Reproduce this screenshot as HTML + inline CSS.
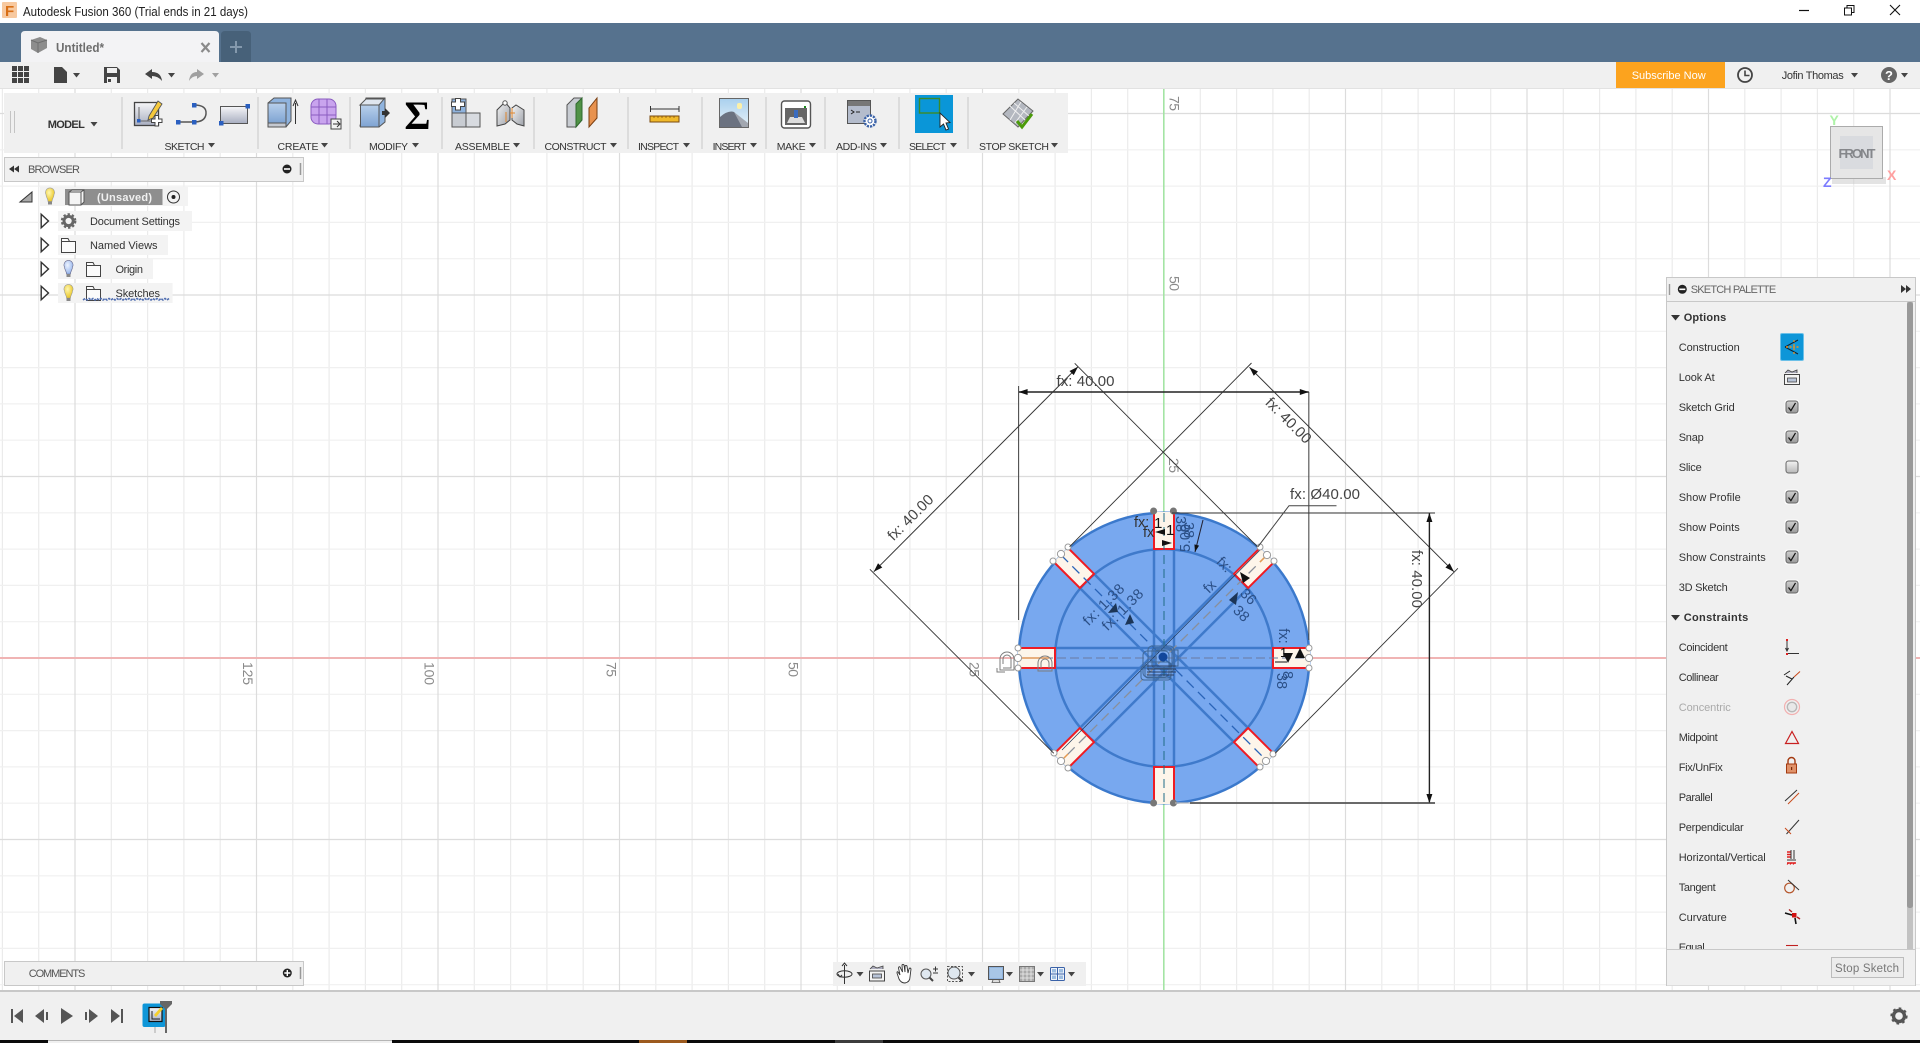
<!DOCTYPE html>
<html><head><meta charset="utf-8"><title>Autodesk Fusion 360</title>
<style>
html,body{margin:0;padding:0;background:#fff;overflow:hidden}
svg{display:block}
text{font-family:"Liberation Sans",sans-serif}
.t{font-size:10.5px;fill:#333}
.p{font-size:11px;fill:#333}
.d{font-size:15px;fill:#444}
.s{font-size:14.5px;fill:#2b4f86}
.a{font-size:14px;fill:#8a8a8a}
</style></head><body>
<svg width="1920" height="1043" viewBox="0 0 1920 1043" xmlns="http://www.w3.org/2000/svg" lengthAdjust="spacingAndGlyphs">
<defs>
<linearGradient id="cbg" x1="0" y1="0" x2="0" y2="1"><stop offset="0" stop-color="#d0d0d0"/><stop offset="1" stop-color="#9a9a9a"/></linearGradient>
<linearGradient id="cbu" x1="0" y1="0" x2="0" y2="1"><stop offset="0" stop-color="#f4f4f4"/><stop offset="1" stop-color="#b8b8b8"/></linearGradient>
<linearGradient id="blu" x1="0" y1="0" x2="0" y2="1"><stop offset="0" stop-color="#b8d0ec"/><stop offset="1" stop-color="#7ea3d2"/></linearGradient>
<linearGradient id="rct" x1="0" y1="0" x2="0" y2="1"><stop offset="0" stop-color="#f6f6f8"/><stop offset="1" stop-color="#a8aec0"/></linearGradient>
<linearGradient id="gry" x1="0" y1="0" x2="1" y2="1"><stop offset="0" stop-color="#f4f4f4"/><stop offset="1" stop-color="#9ea2aa"/></linearGradient>
<linearGradient id="sky" x1="0" y1="0" x2="0" y2="1"><stop offset="0" stop-color="#a9d0ee"/><stop offset="1" stop-color="#e8f2f8"/></linearGradient>
<radialGradient id="bulb" cx=".4" cy=".35" r=".7"><stop offset="0" stop-color="#fff7b0"/><stop offset="1" stop-color="#e8c21a"/></radialGradient>
<radialGradient id="bulbB" cx=".4" cy=".35" r=".7"><stop offset="0" stop-color="#eef4ff"/><stop offset="1" stop-color="#8fb0ea"/></radialGradient>
<polygon id="dn" points="0,0 7,0 3.5,4.5" fill="#444"/>
<g id="cb"><rect x="-1" y="-1" width="15" height="15" rx="3" fill="#fff" opacity=".7"/><rect x=".5" y=".5" width="12" height="12" rx="2.5" fill="url(#cbg)" stroke="#666"/><path d="M3 7 L5.4 10.2 L10 2.4" fill="none" stroke="#111" stroke-width="1.2"/></g>
<g id="fold"><path d="M.5 3.5 H14.5 V14.5 H.5 Z M.5 3.5 V.5 H7 L8.5 3.5" fill="#fbfbfb" stroke="#444" stroke-width="1"/></g>
<path id="tri" d="M.7 .7 L8 7.5 L.7 14.3 Z" fill="#fff" stroke="#333" stroke-width="1.4"/>
<g id="ar"><polygon points="0,0 -9,-3 -9,3" fill="#111"/></g>
<g id="bar">
  <path d="M-10 -109 V0 M10 -109 V0" stroke="#3f7acb" stroke-width="2.5" fill="none"/>
</g>
<g id="slot">
  <rect x="-10" y="-146" width="20" height="37" fill="#fdf5ea"/>
  <path d="M-10 -144 V-109 H10 V-144" fill="none" stroke="#ee1c24" stroke-width="2"/>
</g>
</defs>

<!-- canvas + grid -->
<rect x="0" y="88" width="1920" height="903" fill="#fff"/>
<path fill="none" stroke="#ebebeb" stroke-width="1.2" d="M2.4 88V991M38.7 88V991M111.3 88V991M147.6 88V991M183.9 88V991M220.2 88V991M292.8 88V991M329.1 88V991M365.4 88V991M401.7 88V991M474.3 88V991M510.6 88V991M546.9 88V991M583.2 88V991M655.8 88V991M692.1 88V991M728.4 88V991M764.7 88V991M837.3 88V991M873.6 88V991M909.9 88V991M946.2 88V991M1018.8 88V991M1055.1 88V991M1091.4 88V991M1127.7 88V991M1200.3 88V991M1236.6 88V991M1272.9 88V991M1309.2 88V991M1381.8 88V991M1418.1 88V991M1454.4 88V991M1490.7 88V991M1563.3 88V991M1599.6 88V991M1635.9 88V991M1672.2 88V991M1744.8 88V991M1781.1 88V991M1817.4 88V991M1853.7 88V991"/>
<path fill="none" stroke="#f0f0f0" stroke-width="1.2" d="M0 149.8H1920M0 186.1H1920M0 222.4H1920M0 258.7H1920M0 331.3H1920M0 367.6H1920M0 403.9H1920M0 440.2H1920M0 512.8H1920M0 549.1H1920M0 585.4H1920M0 621.7H1920M0 694.3H1920M0 730.6H1920M0 766.9H1920M0 803.2H1920M0 875.8H1920M0 912.1H1920M0 948.4H1920M0 984.7H1920"/>
<path fill="none" stroke="#dcdcdc" stroke-width="1.2" d="M75 88V991M256.5 88V991M438 88V991M619.5 88V991M801 88V991M982.5 88V991M1345.5 88V991M1527 88V991M1708.5 88V991M1890 88V991M0 113.5H1920M0 295H1920M0 476.5H1920M0 839.5H1920"/>
<rect x="0" y="657" width="1920" height="2" fill="#f0b4b4"/>
<rect x="1163" y="88" width="1.6" height="903" fill="#a4e4a4"/>

<!-- axis labels -->
<text class="a" transform="translate(243 662) rotate(90)" textLength="23">125</text>
<text class="a" transform="translate(424.5 662) rotate(90)" textLength="23">100</text>
<text class="a" transform="translate(606.5 662) rotate(90)" textLength="15">75</text>
<text class="a" transform="translate(788.5 662) rotate(90)" textLength="15">50</text>
<text class="a" transform="translate(969.5 662) rotate(90)" textLength="15">25</text>
<text class="a" transform="translate(1169.5 96) rotate(90)" textLength="15">75</text>
<text class="a" transform="translate(1169.5 276) rotate(90)" textLength="15">50</text>
<text class="a" transform="translate(1169 458) rotate(90)" textLength="15">25</text>

<!-- sketch -->
<circle cx="1164" cy="658" r="145.2" fill="#78a8ef" stroke="#3b79cc" stroke-width="2.5"/>
<g transform="translate(1164 658)">
  <circle r="108.9" fill="none" stroke="#3f7acb" stroke-width="2.5"/>
  <use href="#bar"/><use href="#bar" transform="rotate(45)"/><use href="#bar" transform="rotate(90)"/><use href="#bar" transform="rotate(135)"/>
  <use href="#bar" transform="rotate(180)"/><use href="#bar" transform="rotate(225)"/><use href="#bar" transform="rotate(270)"/><use href="#bar" transform="rotate(315)"/>
  <use href="#slot"/><use href="#slot" transform="rotate(45)"/><use href="#slot" transform="rotate(90)"/><use href="#slot" transform="rotate(135)"/>
  <use href="#slot" transform="rotate(180)"/><use href="#slot" transform="rotate(225)"/><use href="#slot" transform="rotate(270)"/><use href="#slot" transform="rotate(315)"/>
  <path d="M0 -145 V145" stroke="#1f6b86" stroke-width="1" stroke-dasharray="9 5"/>
  <path d="M-103 -103 L0 0 M0 0 L103 103" stroke="#2a64b8" stroke-width="1.3" stroke-dasharray="10 6"/>
  <path d="M103 -103 L-103 103" stroke="#8a8f9a" stroke-width="1.3" stroke-dasharray="10 6"/>
  <path d="M103 -103 L96 -96" stroke="#e69a50" stroke-width="1.5"/>
  <path d="M-103 103 L-96 96" stroke="#e69a50" stroke-width="1.5"/>
  <path d="M-146 0 H1" stroke="#6a7aa0" stroke-width="1" stroke-dasharray="9 4"/>
  <path d="M1 0 H146" stroke="#6a7aa0" stroke-width="1" stroke-dasharray="9 4"/>
  <path d="M-146 0 H-115" stroke="#e0985a" stroke-width="1.5"/>
  <path d="M96 -108 L-102 92" stroke="#1c3557" stroke-width=".7"/>
  <!-- center mess -->
  <g fill="none" stroke="#3f6796" stroke-width="1">
    <rect x="-16" y="-12" width="26" height="26" rx="4"/><rect x="-21" y="-7" width="26" height="26" rx="4"/>
    <rect x="-19" y="4" width="26" height="16" rx="3"/><rect x="-23" y="8" width="30" height="14" rx="3"/>
    <rect x="-8" y="-8" width="22" height="16"/><rect x="-12" y="-10" width="20" height="20" rx="3"/>
  </g>
  <path d="M-17 8 H12 M-17 11 H12 M-17 14 H12 M-17 17 H10" stroke="#2c3f60" stroke-width="1"/>
  <circle cx="-1" cy="-1" r="4.5" fill="#12479c"/>
</g>

<!-- sketch points -->
<g fill="#fff" stroke="#9a9a9a" stroke-width="1">
  <circle cx="1018" cy="648" r="3"/><circle cx="1018" cy="658" r="3.6"/><circle cx="1018" cy="668" r="3"/>
  <circle cx="1309" cy="648" r="3"/><circle cx="1309" cy="658" r="3.6"/><circle cx="1309" cy="668" r="3"/>
  <circle cx="1053" cy="561" r="3"/><circle cx="1061" cy="554" r="3.6"/><circle cx="1068" cy="547" r="3"/>
  <circle cx="1260" cy="547" r="3"/><circle cx="1267" cy="555" r="3.6"/><circle cx="1274" cy="561" r="3"/>
  <circle cx="1054" cy="753" r="3"/><circle cx="1061" cy="761" r="3.6"/><circle cx="1068" cy="768" r="3"/>
  <circle cx="1273" cy="754" r="3"/><circle cx="1266" cy="761" r="3.6"/><circle cx="1260" cy="767" r="3"/>
</g>
<g fill="#777"><circle cx="1153.6" cy="511" r="3.5"/><circle cx="1173.4" cy="511" r="3.5"/><circle cx="1153.6" cy="803" r="3.5"/><circle cx="1173.4" cy="803" r="3.5"/></g>

<!-- constraint glyph shapes near left slot -->
<g fill="none" stroke="#7d7d7d" stroke-width="1">
  <path d="M1003 664 v-5 a4 4 0 0 1 8 0 v9 h-8"/><path d="M1000 664 v-5 a7 7 0 0 1 14 0 v11 h-14 z"/><path d="M1005 672 h-8 v-4"/>
  <path d="M1041 668 v-5 a4 4 0 0 1 8 0 v5"/><path d="M1038 668 v-5 a7 7 0 0 1 14 0 v8 h-14 z"/>
</g>

<!-- dimensions -->
<g fill="none" stroke="#333" stroke-width="1">
  <path d="M1018.6 392 H1308.8" stroke="#222" stroke-width="1.4"/>
  <path d="M1018.6 386 V620 M1308.8 392 V640" stroke="#444"/>
  <path d="M873.8 571.7 L1078 366.7"/>
  <path d="M1074.7 363.3 L1257.4 546.7 M1251.5 363 L1069.6 546.7" stroke-width=".9"/>
  <path d="M1249.5 367.3 L1453.9 571.7"/>
  <path d="M869.9 569.3 L1053.8 753.3 M1457.9 568.3 L1275.2 753.3" stroke-width=".9"/>
  <path d="M1429.4 513 V803" stroke="#222" stroke-width="1.4"/>
  <path d="M1172 513 H1435"/>
  <path d="M1175 803 H1190" stroke="#bbb" stroke-width="1.2"/>
  <path d="M1190 803 H1435" stroke="#555" stroke-width="1.8"/>
  <path d="M1336.5 505.7 H1289 L1258 546.7" stroke="#444"/>
  <path d="M1203 520 L1195 552" stroke="#223"/>
</g>
<use href="#ar" transform="translate(1018.6 392) rotate(180)"/>
<use href="#ar" transform="translate(1308.8 392)"/>
<use href="#ar" transform="translate(1429.4 513) rotate(-90)"/>
<use href="#ar" transform="translate(1429.4 803) rotate(90)"/>
<use href="#ar" transform="translate(873.8 571.7) rotate(135)"/>
<use href="#ar" transform="translate(1078 366.7) rotate(-45)"/>
<use href="#ar" transform="translate(1249.5 367.3) rotate(-135)"/>
<use href="#ar" transform="translate(1453.9 571.7) rotate(45)"/>
<use href="#ar" transform="translate(1195 552) rotate(104) scale(.8)"/>

<text class="d" x="1056.5" y="386" textLength="58">fx: 40.00</text>
<text class="d" x="1290" y="499" textLength="70">fx: Ø40.00</text>
<text class="d" text-anchor="middle" transform="translate(914 521) rotate(-45)" textLength="58">fx: 40.00</text>
<text class="d" text-anchor="middle" transform="translate(1285 424) rotate(45)" textLength="58">fx: 40.00</text>
<text class="d" text-anchor="middle" transform="translate(1412 579) rotate(90)" textLength="58">fx: 40.00</text>

<!-- dims over sketch -->
<text class="s" text-anchor="middle" transform="translate(1107 608) rotate(-45)" textLength="52">fx: 1.38</text>
<text class="s" text-anchor="middle" transform="translate(1126 613) rotate(-45)" textLength="52">fx: 1.38</text>
<polygon points="1108,613 1116,603 1118,612" fill="#1c3557"/>
<polygon points="1125,625 1130,614 1134,623" fill="#1c3557"/>
<text class="s" text-anchor="middle" transform="translate(1221 568) rotate(45)">fx:</text>
<text class="s" text-anchor="middle" transform="translate(1213 590) rotate(-45)">fx</text>
<text class="s" text-anchor="middle" transform="translate(1238 617) rotate(45)">38</text>
<text class="s" text-anchor="middle" transform="translate(1245 600) rotate(45)">36</text>
<polygon points="1229,600 1238,592 1236,605" fill="#1c3557"/>
<polygon points="1240,572 1250,578 1243,583" fill="#111"/>
<text class="s" x="1134" y="527" style="fill:#333">fx:</text>
<text class="s" x="1143" y="537" style="fill:#333">fx</text>
<text x="1154" y="528" style="font-size:15px;fill:#111">1</text>
<text x="1166" y="535" style="font-size:15px;fill:#111">1</text>
<polygon points="1155,532 1165,529 1165,535" fill="#111"/>
<polygon points="1162,540 1172,543 1162,546" fill="#111"/>
<text class="s" text-anchor="middle" transform="translate(1176 524) rotate(90)">38</text>
<text class="s" text-anchor="middle" transform="translate(1184 530) rotate(90)">38</text>
<text class="s" text-anchor="middle" transform="translate(1190 538) rotate(-90)" textLength="28">5.00</text>
<text class="s" text-anchor="middle" transform="translate(1279 636) rotate(90)">fx:</text>
<text x="1280" y="657" style="font-size:13px;fill:#111">1</text>
<polygon points="1292,653 1297,663 1287,663" fill="#111" transform="rotate(180 1290 658)"/>
<polygon points="1300,648 1305,658 1295,658" fill="#111"/>
<path d="M1275 662 h12" stroke="#111"/>
<text class="s" text-anchor="middle" transform="translate(1277 681) rotate(90)">38</text>
<text class="s" text-anchor="middle" transform="translate(1283 675) rotate(90)">8</text>

<!-- title bar -->
<rect width="1920" height="23" fill="#fff"/>
<rect x="2" y="2" width="15" height="16" rx="1" fill="#f7c9a0"/>
<text x="5" y="16" style="font-size:15px;font-weight:bold;fill:#d86f16">F</text>
<text x="23" y="16" style="font-size:12.5px;fill:#222" textLength="225" lengthAdjust="spacingAndGlyphs">Autodesk Fusion 360 (Trial ends in 21 days)</text>
<path d="M1799 10.5 H1809" stroke="#111" stroke-width="1.2"/>
<path d="M1844.5 8 H1851.5 V15 H1844.5 Z M1847 8 V5.5 H1854 V12.5 H1851.5" fill="none" stroke="#111" stroke-width="1"/>
<path d="M1890 5 L1900 15 M1900 5 L1890 15" stroke="#111" stroke-width="1.1"/>

<!-- tabs bar -->
<rect y="23" width="1920" height="39" fill="#56728e"/>
<path d="M21 62 V35 Q21 31 25 31 H215 Q219 31 219 35 V62 Z" fill="#f3f3f5"/>
<path d="M221 62 V35 Q221 31 225 31 H247 Q251 31 251 35 V62 Z" fill="#476179"/>
<path d="M31 40 L40 37 L47 40 V48 L38 53 L31 49 Z" fill="#8d8d8d"/><path d="M31 40 L38 43 L47 40 M38 43 V53" stroke="#6e6e6e" fill="none"/>
<text x="56" y="52" style="font-size:12.5px;font-weight:bold;fill:#6d6d6d" textLength="48" lengthAdjust="spacingAndGlyphs">Untitled*</text>
<path d="M201.5 43 L209.5 52 M209.5 43 L201.5 52" stroke="#8a8a8a" stroke-width="2.2"/>
<path d="M236 41 V53 M230 47 H242" stroke="#8499ad" stroke-width="2"/>

<!-- quick access bar -->
<rect y="62" width="1920" height="26" fill="#f0f0f0"/>
<rect y="88" width="1920" height="1" fill="#e2e2e2"/>
<g fill="#444">
  <rect x="12" y="66" width="5" height="5"/><rect x="18" y="66" width="5" height="5"/><rect x="24" y="66" width="5" height="5"/>
  <rect x="12" y="72" width="5" height="5"/><rect x="18" y="72" width="5" height="5"/><rect x="24" y="72" width="5" height="5"/>
  <rect x="12" y="78" width="5" height="5"/><rect x="18" y="78" width="5" height="5"/><rect x="24" y="78" width="5" height="5"/>
  <path d="M54 67 H62 L67 72 V83 H54 Z"/>
  <path d="M104 67 H117 L120 70 V83 H104 Z"/>
  <path d="M145 74 L152 69 V72 Q161 72 162 81 Q158 76 152 76 V79 Z"/>
</g>
<rect x="107" y="68" width="10" height="5" fill="#f0f0f0"/><rect x="107" y="77" width="10" height="6" fill="#f0f0f0"/><rect x="108" y="79" width="3" height="3" fill="#444"/>
<path d="M204 74 L197 69 V72 Q190 72 189 81 Q192 76 197 76 V79 Z" fill="#a0a0a0"/>
<use href="#dn" x="73" y="73"/><use href="#dn" x="168" y="73"/>
<polygon points="212,73 219,73 215.5,77.5" fill="#a0a0a0"/>

<rect x="1616" y="62" width="109" height="26" fill="#fca31e"/>
<text x="1631.7" y="79" style="font-size:11px;fill:#fff" textLength="74">Subscribe Now</text>
<circle cx="1745" cy="75" r="7" fill="none" stroke="#444" stroke-width="1.8"/><path d="M1745 70.5 V75.5 H1749.5" fill="none" stroke="#444" stroke-width="1.6"/>
<text x="1781.7" y="79" style="font-size:11px;fill:#333" textLength="62">Jofin Thomas</text>
<use href="#dn" x="1851" y="73"/>
<circle cx="1889" cy="75" r="8" fill="#666"/><text x="1889" y="80" text-anchor="middle" style="font-size:13px;font-weight:bold;fill:#fff">?</text>
<use href="#dn" x="1901" y="73"/>

<!-- main toolbar -->
<rect x="4" y="93" width="1064" height="60" fill="#f0f0f0"/>
<path d="M10.5 111 V133 M14.5 111 V133" stroke="#c4c4c4"/>
<g fill="#dcdcdc">
<rect x="121" y="97" width="2" height="52"/><rect x="257" y="97" width="2" height="52"/><rect x="349" y="97" width="2" height="52"/><rect x="441" y="97" width="2" height="52"/><rect x="533" y="97" width="2" height="52"/><rect x="627" y="97" width="2" height="52"/><rect x="701" y="97" width="2" height="52"/><rect x="765" y="97" width="2" height="52"/><rect x="824" y="97" width="2" height="52"/><rect x="898" y="97" width="2" height="52"/><rect x="967" y="97" width="2" height="52"/>
</g>
<text x="47.8" y="128" style="font-size:11px;font-weight:bold;fill:#333" textLength="37">MODEL</text><use href="#dn" x="90.5" y="122"/>

<text class="t" x="164.5" y="150" textLength="40">SKETCH</text><use href="#dn" x="208" y="143"/>
<text class="t" x="277.5" y="150" textLength="41">CREATE</text><use href="#dn" x="321" y="143"/>
<text class="t" x="369" y="150" textLength="39">MODIFY</text><use href="#dn" x="412" y="143"/>
<text class="t" x="455" y="150" textLength="55">ASSEMBLE</text><use href="#dn" x="513" y="143"/>
<text class="t" x="544.5" y="150" textLength="62">CONSTRUCT</text><use href="#dn" x="610" y="143"/>
<text class="t" x="638" y="150" textLength="41">INSPECT</text><use href="#dn" x="683" y="143"/>
<text class="t" x="712.6" y="150" textLength="34">INSERT</text><use href="#dn" x="750" y="143"/>
<text class="t" x="776.7" y="150" textLength="29">MAKE</text><use href="#dn" x="809" y="143"/>
<text class="t" x="836" y="150" textLength="41">ADD-INS</text><use href="#dn" x="880" y="143"/>
<text class="t" x="909" y="150" textLength="37">SELECT</text><use href="#dn" x="950" y="143"/>
<text class="t" x="979" y="150" textLength="70">STOP SKETCH</text><use href="#dn" x="1051" y="143"/>

<!-- sketch icon -->
<rect x="134.5" y="102.5" width="24" height="23" fill="url(#rct)" stroke="#444" stroke-width="1.3"/>
<path d="M139 107 V121 H153" fill="none" stroke="#666"/>
<rect x="137" y="119" width="3.5" height="3.5" fill="#2a5fc0"/>
<path d="M149 116 L158 101 L162 104 L153 118 L148 120 Z" fill="#f6c93c" stroke="#555" stroke-width=".9"/>
<path d="M151.5 119 h3.5 v-3.5 h3.5 v3.5 h3.5 v3.5 h-3.5 v3.5 h-3.5 v-3.5 h-3.5 Z" fill="#fff" stroke="#444"/>
<!-- line icon -->
<path d="M178 122 H194 M194 105 Q207 105 206 114 Q205 122 194 122" fill="none" stroke="#555" stroke-width="1.5"/>
<g fill="#2a5fc0"><rect x="176" y="120" width="4.5" height="4.5"/><rect x="192" y="120" width="4.5" height="4.5"/><rect x="192" y="103" width="4.5" height="4.5"/></g>
<!-- rect icon -->
<rect x="220.5" y="106.5" width="27" height="17" fill="url(#rct)" stroke="#555"/>
<rect x="245.5" y="104" width="4.5" height="4.5" fill="#2a5fc0"/><rect x="219" y="121" width="4.5" height="4.5" fill="#2a5fc0"/>
<!-- box -->
<path d="M268 103 L274 98 H291 V121 L286 127 H268 Z" fill="#8fb3de" stroke="#555"/>
<rect x="268" y="103" width="18" height="20" fill="url(#blu)" stroke="#555"/><path d="M268 123 H286 V127 H268 Z" fill="#c4c8d0" stroke="#555"/>
<path d="M295.5 124 V103 M293 106 L295.5 100 L298 106" fill="none" stroke="#333"/>
<!-- sculpt -->
<rect x="311" y="99" width="25" height="25" rx="7" fill="#c9a4ee" stroke="#8a5cc0"/>
<path d="M311 107 H336 M311 115 H336 M319 99 V124 M327 99 V124" stroke="#8a5cc0"/>
<rect x="331" y="119" width="10" height="10" fill="#f4f4f4" stroke="#444"/><path d="M333 124 H339 M337 121 L340 124 L337 127" stroke="#333" fill="none"/>
<!-- modify -->
<path d="M360 126 L366 98 H385 V122 L379 127 Z" fill="#8fb3de" stroke="#555"/>
<path d="M360 105 L366 99 H384 L379 105 Z" fill="#dfe6ef" stroke="#555"/>
<rect x="360.5" y="105" width="18.5" height="22" fill="url(#blu)" stroke="#555"/>
<path d="M382 111 H385 V108 L390 113 L385 118 V115 H382 Z" fill="#333"/>
<!-- sigma -->
<text x="417.5" y="129" text-anchor="middle" style="font-family:'Liberation Serif',serif;font-size:40px;font-weight:bold;fill:#000">Σ</text>
<!-- assemble -->
<rect x="452" y="113" width="14" height="14" fill="#c8ccd2" stroke="#555"/>
<rect x="466" y="113" width="14" height="14" fill="#d8dbe0" stroke="#555"/>
<rect x="452" y="99" width="14" height="14" fill="#8fb3de" stroke="#555"/>
<path d="M451.5 102 h4 v-3.5 h5 v3.5 h4 v4.5 h-4 v3.5 h-5 v-3.5 h-4 Z" fill="#fff" stroke="#444"/>
<!-- joint -->
<path d="M497 126 V110 L505 102 L510 108 V120 L505 124 Z" fill="url(#gry)" stroke="#444"/>
<path d="M524 126 V110 L516 105 L512 108 V120 L517 124 Z" fill="url(#gry)" stroke="#444"/>
<circle cx="505" cy="103" r="2.2" fill="#fff" stroke="#555"/>
<path d="M506 112 V122 M512 108 V118 M510 113 H515" stroke="#e0862c"/>
<!-- construct -->
<path d="M567 105 L574 98 H582 V120 L576 127 H567 Z" fill="#c8ccd2" stroke="#555"/>
<path d="M576 104 L582 98 V120 L576 127 Z" fill="#4f9246" stroke="#2f6a2f"/>
<path d="M589 127 V108 L597 98 V118 Z" fill="#e8924e" stroke="#7a3e10"/>
<!-- inspect -->
<path d="M650.5 106 V112 M650.5 109 H679 M679 106 V112" stroke="#333" fill="none"/>
<rect x="650" y="116" width="29" height="6" fill="#f0b92a" stroke="#7a4a10"/>
<path d="M654 116 V118 M658 116 V118 M662 116 V118 M666 116 V118 M670 116 V118 M674 116 V118" stroke="#7a4a10" stroke-width=".7"/>
<!-- insert -->
<rect x="719.5" y="98.5" width="29" height="29" fill="url(#sky)" stroke="#666"/>
<path d="M720 127 V117 Q728 110 734 112 L748 126 V127 Z" fill="#6b7280"/><path d="M734 112 L748 123 V127 H742 Z" fill="#a2a7b0"/>
<rect x="737" y="103" width="5" height="6" rx="2" fill="#fcf0a8"/>
<!-- make -->
<rect x="781.5" y="101" width="29" height="27" rx="3" fill="#fff" stroke="#555" stroke-width="1.4"/>
<rect x="785" y="108" width="22" height="17" fill="#666"/>
<path d="M787 123 L790 117 H802 L805 123 Z" fill="#ddd"/><rect x="794" y="110" width="4" height="8" fill="#3a6cc0"/>
<rect x="804" y="106" width="2" height="2" fill="#1a8a1a"/>
<!-- add-ins -->
<rect x="847.5" y="100.5" width="23" height="23" fill="#b4bccc" stroke="#555"/>
<rect x="848" y="101" width="22" height="5" fill="#777"/>
<path d="M851 110 L854 112 L851 114 M856 112 H860" stroke="#222" fill="none"/>
<circle cx="870" cy="121" r="5.5" fill="#fff" stroke="#3a62a8" stroke-width="2.4" stroke-dasharray="2.2 1"/>
<circle cx="870" cy="121" r="2" fill="#fff" stroke="#3a62a8"/>
<!-- select -->
<rect x="915" y="95" width="38" height="38" fill="#0a96d8"/>
<rect x="919.5" y="98.5" width="20" height="14.5" fill="none" stroke="#3d8a28" stroke-width="1.4"/>
<path d="M940 113 V127 L943.5 124 L946 130 L948.5 129 L946 123 L950 122.5 Z" fill="#fff" stroke="#222" stroke-width=".9"/>
<!-- stop sketch -->
<path d="M1003 114 L1018 99 L1033 111 L1018 127 Z" fill="#b4b8c0" stroke="#666"/>
<path d="M1010 106 L1025 120 M1014 103 L1029 116 M1021 102 L1010 120 M1027 107 L1015 123" stroke="#f0f0f0" fill="none"/>
<path d="M1017 121 L1022 127 L1032 114" fill="none" stroke="#4b9a0a" stroke-width="3"/>

<!-- browser panel -->
<rect x="4.5" y="157.5" width="299" height="24" fill="#f0f0f0" stroke="#c8c8c8"/>
<path d="M9 169 L14 165.5 V172.5 Z M14 169 L19 165.5 V172.5 Z" fill="#333"/>
<text x="28" y="173" style="font-size:11px;fill:#555" textLength="52">BROWSER</text>
<circle cx="287" cy="169" r="4.5" fill="#222"/><rect x="284" y="168.2" width="6" height="1.6" fill="#fff"/>
<path d="M300.5 163 V175" stroke="#999" stroke-width="1.5"/>

<path d="M32 192 V202 H20 Z" fill="#aaa" stroke="#333"/>
<rect x="40" y="187" width="148" height="19" fill="#f3f3f3"/>
<rect x="65" y="189" width="97.5" height="16" fill="#8e8e8e"/>
<g transform="translate(0 1.5)"><path d="M46 193 A4.5 4.5 0 1 1 54 193 C54 196 52 197 52 200 H48 C48 197 46 196 46 193 Z" fill="url(#bulb)" stroke="#999" stroke-width=".6"/><rect x="48" y="200" width="4" height="3" fill="#888"/></g>
<path d="M69 192 L72 190 H84 V202 L81 205 H69 Z M69 192 H81 V205 M81 192 L84 190" fill="#f4f4f4" stroke="#555"/>
<text x="97" y="201" style="font-size:11px;font-weight:bold;fill:#f0f0f0" textLength="55">(Unsaved)</text>
<circle cx="173.5" cy="197" r="6" fill="#f3f3f3" stroke="#333"/><circle cx="173.5" cy="197" r="2" fill="#222"/>

<rect x="58" y="211" width="134" height="20" fill="#f3f3f3"/>
<rect x="58" y="235" width="110" height="20" fill="#f3f3f3"/>
<rect x="58" y="259" width="95" height="20" fill="#f3f3f3"/>
<rect x="58" y="283" width="114.6" height="20" fill="#f3f3f3"/>
<use href="#tri" x="40.5" y="213.5"/><use href="#tri" x="40.5" y="237.5"/><use href="#tri" x="40.5" y="261.5"/><use href="#tri" x="40.5" y="285.5"/>
<circle cx="68.6" cy="221" r="4.6" fill="none" stroke="#666" stroke-width="3"/><circle cx="68.6" cy="221" r="6.8" fill="none" stroke="#666" stroke-width="2" stroke-dasharray="2.4 2"/>
<text x="90" y="225" style="font-size:11px;fill:#333" textLength="90">Document Settings</text>
<use href="#fold" x="61" y="238"/>
<text x="90" y="249" style="font-size:11px;fill:#333" textLength="67.5">Named Views</text>
<g transform="translate(0 2)"><path d="M64.5 265 A4.5 4.5 0 1 1 72.5 265 C72.5 268 70.5 269 70.5 272 H66.5 C66.5 269 64.5 268 64.5 265 Z" fill="url(#bulbB)" stroke="#668" stroke-width=".6"/><rect x="66.5" y="272" width="4" height="3" fill="#888"/></g>
<use href="#fold" x="86" y="262"/>
<text x="115.5" y="273" style="font-size:11px;fill:#333" textLength="27.5">Origin</text>
<g transform="translate(0 2)"><path d="M64.5 289 A4.5 4.5 0 1 1 72.5 289 C72.5 292 70.5 293 70.5 296 H66.5 C66.5 293 64.5 292 64.5 289 Z" fill="url(#bulb)" stroke="#999" stroke-width=".6"/><rect x="66.5" y="296" width="4" height="3" fill="#888"/></g>
<use href="#fold" x="86" y="286"/>
<text x="115.5" y="297" style="font-size:11px;fill:#333" textLength="44.5">Sketches</text>
<path d="M83 300 l2 -1.5 2 1.5 2 -1.5 2 1.5 2 -1.5 2 1.5 2 -1.5 2 1.5 2 -1.5 2 1.5 2 -1.5 2 1.5 2 -1.5 2 1.5 2 -1.5 2 1.5 2 -1.5 2 1.5 2 -1.5 2 1.5 2 -1.5 2 1.5 2 -1.5 2 1.5 2 -1.5 2 1.5 2 -1.5 2 1.5 2 -1.5 2 1.5 2 -1.5 2 1.5 2 -1.5 2 1.5 2 -1.5 2 1.5 2 -1.5 2 1.5 2 -1.5 2 1.5 2 -1.5 2 1.5 2 -1.5" fill="none" stroke="#4f6db0" stroke-width="1.6" stroke-dasharray="2.5 1"/>

<!-- view cube -->
<text x="1829.5" y="125" style="font-size:14px;font-weight:bold;fill:#aef2a8">Y</text>
<rect x="1832" y="177" width="54" height="7" fill="#c8c8c8" opacity=".5"/>
<rect x="1830.5" y="126.5" width="52" height="52" fill="#e6e6e6" stroke="#ababab"/>
<rect x="1840" y="136" width="33" height="33" fill="#d9dbdf"/>
<text x="1838.5" y="158" style="font-size:13px;font-weight:bold;fill:#85878b" textLength="37">FRONT</text>
<text x="1887" y="180" style="font-size:14px;font-weight:bold;fill:#ffa0a0">X</text>
<text x="1823" y="187" style="font-size:14px;font-weight:bold;fill:#7c7cff">Z</text>

<!-- sketch palette -->
<rect x="1666.5" y="277.5" width="249" height="708" fill="#f0f0f0" stroke="#c8c8c8"/>
<path d="M1666.5 301.5 H1915.5" stroke="#c8c8c8"/>
<path d="M1669.5 284 V295" stroke="#999" stroke-width="1.4"/>
<circle cx="1682.3" cy="289.3" r="4.5" fill="#222"/><rect x="1679.3" y="288.5" width="6" height="1.6" fill="#fff"/>
<text x="1690.7" y="293" style="font-size:11px;fill:#666" textLength="85.5">SKETCH PALETTE</text>
<path d="M1901 285 L1906 289 L1901 293 Z M1906 285 L1911 289 L1906 293 Z" fill="#333"/>
<rect x="1907" y="302" width="6" height="647" fill="#c2c2c2"/>
<rect x="1907" y="302" width="6" height="606" rx="2.5" fill="#999"/>

<polygon points="1671,315 1680,315 1675.5,320.5" fill="#333"/>
<text x="1683.7" y="321" style="font-size:11px;font-weight:bold;fill:#333" textLength="42.5">Options</text>
<text class="p" x="1678.7" y="351" textLength="61">Construction</text>
<text class="p" x="1678.7" y="381" textLength="36">Look At</text>
<text class="p" x="1678.7" y="411" textLength="56">Sketch Grid</text>
<text class="p" x="1678.7" y="441" textLength="25">Snap</text>
<text class="p" x="1678.7" y="471" textLength="23">Slice</text>
<text class="p" x="1678.7" y="501" textLength="62">Show Profile</text>
<text class="p" x="1678.7" y="531" textLength="61">Show Points</text>
<text class="p" x="1678.7" y="561" textLength="87">Show Constraints</text>
<text class="p" x="1678.7" y="591" textLength="49">3D Sketch</text>

<rect x="1780.5" y="333.5" width="23" height="27" rx="1.5" fill="#0e96d8" stroke="#6cc0e8"/>
<path d="M1785 347 L1798 340 M1785 347 L1798 354" stroke="#123" fill="none"/><path d="M1786 347 H1800" stroke="#f09018" stroke-width="1.4" stroke-dasharray="2 1.5"/>
<path d="M1794 340 V354" stroke="#f09018" stroke-width="1.2" stroke-dasharray="2 2"/>
<rect x="1784.5" y="374.5" width="15" height="10" fill="#f4f4f4" stroke="#444"/>
<rect x="1787.5" y="378" width="9" height="4" fill="#b8c4d8" stroke="#444" stroke-width=".8"/>
<path d="M1785 373 L1788 370 L1792 372 L1797 370 V373" fill="#aab" stroke="#444" stroke-width=".8"/>
<use href="#cb" x="1785.5" y="400.5"/><use href="#cb" x="1785.5" y="430.5"/>
<rect x="1786" y="461" width="12" height="12" rx="2.5" fill="url(#cbu)" stroke="#666"/>
<use href="#cb" x="1785.5" y="490.5"/><use href="#cb" x="1785.5" y="520.5"/><use href="#cb" x="1785.5" y="550.5"/><use href="#cb" x="1785.5" y="580.5"/>

<polygon points="1671,615 1680,615 1675.5,620.5" fill="#333"/>
<text x="1683.7" y="621" style="font-size:11px;font-weight:bold;fill:#333" textLength="64.5">Constraints</text>
<text class="p" x="1678.7" y="651" textLength="49">Coincident</text>
<text class="p" x="1678.7" y="681" textLength="40">Collinear</text>
<text class="p" x="1678.7" y="711" textLength="52" style="fill:#aaa">Concentric</text>
<text class="p" x="1678.7" y="741" textLength="39">Midpoint</text>
<text class="p" x="1678.7" y="771" textLength="44">Fix/UnFix</text>
<text class="p" x="1678.7" y="801" textLength="34">Parallel</text>
<text class="p" x="1678.7" y="831" textLength="65">Perpendicular</text>
<text class="p" x="1678.7" y="861" textLength="87">Horizontal/Vertical</text>
<text class="p" x="1678.7" y="891" textLength="37">Tangent</text>
<text class="p" x="1678.7" y="921" textLength="48">Curvature</text>
<text class="p" x="1678.7" y="951" textLength="26">Equal</text>

<!-- constraint icons -->
<path d="M1787 641 V650 M1785.5 648 L1787 651 L1788.5 648 M1787 653.5 H1799" stroke="#333" fill="none"/>
<rect x="1786" y="639" width="2" height="2" fill="#d22"/><rect x="1786" y="653" width="2" height="2" fill="#d22"/>
<path d="M1784 675 L1790 671 M1794 677 L1787 685 M1786 676 L1792 679" stroke="#222" fill="none"/><path d="M1794 677 L1800 671.5" stroke="#c8491a"/>
<circle cx="1792" cy="707" r="7.5" fill="none" stroke="#f2b0b0" stroke-width="1.2"/><circle cx="1792" cy="707" r="4.7" fill="#e8e8e8" stroke="#b8b8b8" stroke-width="1.4"/>
<path d="M1785.5 743.5 L1792 731.5 L1798.5 743.5 Z" fill="none" stroke="#c82020" stroke-width="1.2"/>
<path d="M1788 764 V761 A3.5 3.5 0 0 1 1795 761 V764" fill="none" stroke="#a33a10" stroke-width="1.4"/>
<rect x="1786.5" y="764" width="10" height="9" fill="#e0926a" stroke="#a33a10"/><rect x="1791" y="767" width="1.2" height="3" fill="#7a2a08"/>
<path d="M1785 801 L1797 790" stroke="#333"/><path d="M1788 804 L1799 793" stroke="#c8491a"/>
<path d="M1786.5 834 L1799 820" stroke="#333"/><path d="M1785 828 L1791 834" stroke="#c8491a"/>
<path d="M1791 850 V859 M1794 850 V859 M1787 860 H1796" stroke="#333"/><path d="M1787 852 H1790.5 M1787 854.5 H1790.5 M1787 857 H1790.5 M1787 863 H1796" stroke="#e02020" stroke-width="1.5" /><path d="M1787 864.5 L1789 862.5 M1790 864.5 L1792 862.5 M1793 864.5 L1795 862.5" stroke="#e02020"/>
<circle cx="1789.5" cy="888" r="4.8" fill="none" stroke="#b5552a" stroke-width="1.2"/><path d="M1788 880 L1799 890" stroke="#333"/>
<rect x="1792" y="913" width="4.5" height="4.5" fill="#d21010"/>
<path d="M1785 913 L1792 915 M1795 918 L1796 924" stroke="#111" stroke-width="1.6" fill="none"/><path d="M1789 909.5 L1792 912 M1797 917 L1800 919" stroke="#b02020" stroke-width="1.4"/>
<path d="M1786 945.5 H1798" stroke="#c02020" stroke-width="1.1"/><path d="M1786 949.5 H1798" stroke="#c02020" stroke-width="1.1"/>

<rect x="1667" y="949.5" width="248" height="36" fill="#f0f0f0"/>
<path d="M1666.5 949.5 H1915.5" stroke="#c8c8c8"/>
<rect x="1831.5" y="957.5" width="72" height="20" fill="#ececec" stroke="#bcbcbc"/>
<text x="1835" y="972" style="font-size:11.5px;fill:#777" textLength="64">Stop Sketch</text>

<!-- comments -->
<rect x="4.5" y="961.5" width="299" height="24" fill="#f0f0f0" stroke="#c8c8c8"/>
<text x="28.7" y="977" style="font-size:11px;fill:#555" textLength="56.6">COMMENTS</text>
<circle cx="287.3" cy="973" r="4.5" fill="#222"/><path d="M284.3 973 H290.3 M287.3 970 V976" stroke="#fff" stroke-width="1.4"/>
<path d="M300.5 967 V979" stroke="#999" stroke-width="1.5"/>

<!-- nav bar -->
<rect x="833" y="962" width="253" height="24" fill="#f0f0f0"/>
<path d="M842 966 L844.5 963 L847 966 M844.5 965 V984" stroke="#333" fill="none"/>
<ellipse cx="844.5" cy="974" rx="7.5" ry="3.2" fill="none" stroke="#333"/>
<path d="M838 974 L840 977 L842 975" fill="none" stroke="#333"/>
<use href="#dn" x="856.5" y="972"/>
<rect x="869.5" y="971" width="15" height="10" fill="#f4f4f4" stroke="#444"/><rect x="872.5" y="974" width="9" height="4" fill="#b8c4d8" stroke="#444" stroke-width=".8"/>
<path d="M870 969 L873 966 L877 968 L883 966 V969" fill="#aab" stroke="#444" stroke-width=".8"/>
<path d="M897 973 L899 979 Q901 983 905 983 Q910 982 910 977 L911 969 Q910 967 909 969 L908 973 L907 966 Q906 965 905 966 L905 972 L904 965 Q903 964 902 965 L902.5 972 L900 967 Q899 966 898.5 968 L900 975 L898 972 Q897 971 897 973 Z" fill="#fff" stroke="#333" stroke-width=".9"/>
<circle cx="926" cy="974" r="5" fill="#dfe8f0" stroke="#555"/><path d="M929.5 977.5 L933 981" stroke="#444" stroke-width="2"/><path d="M933 969 H938 M935.5 966.5 V971.5 M933 973 H938" stroke="#333"/>
<rect x="947.5" y="966.5" width="15" height="15" fill="none" stroke="#555" stroke-dasharray="2 1.5"/><circle cx="954" cy="973" r="6" fill="#dfe8f0" stroke="#555"/><path d="M958.5 977.5 L962 981" stroke="#444" stroke-width="2"/>
<use href="#dn" x="968" y="972"/>
<rect x="988.5" y="966.5" width="15" height="13" fill="#8fb3de" stroke="#555"/><rect x="990" y="968" width="12" height="10" fill="#a8c6e6"/><path d="M993 980 L992 982.5 H1000 L999 980" fill="#ddd" stroke="#555" stroke-width=".8"/>
<use href="#dn" x="1006" y="972"/>
<rect x="1019.5" y="966.5" width="15" height="15" fill="#aaa" stroke="#777"/>
<path d="M1023 967 V981 M1027 967 V981 M1031 967 V981 M1020 970 H1034 M1020 974 H1034 M1020 978 H1034" stroke="#eee" stroke-width=".8"/>
<use href="#dn" x="1037" y="972"/>
<rect x="1050.5" y="967.5" width="14" height="13" rx="1" fill="#f0f4fa" stroke="#3a62a8"/><path d="M1057.5 967.5 V980.5 M1050.5 974 H1064.5" stroke="#3a62a8"/>
<rect x="1052" y="969" width="4" height="3.5" fill="#9dbde0"/><rect x="1059" y="969" width="4" height="3.5" fill="#9dbde0"/><rect x="1052" y="975.5" width="4" height="3.5" fill="#9dbde0"/><rect x="1059" y="975.5" width="4" height="3.5" fill="#9dbde0"/>
<use href="#dn" x="1068" y="972"/>

<!-- timeline -->
<rect y="990" width="1920" height="50" fill="#f0f0f0"/>
<rect y="990" width="1920" height="2" fill="#c8c8c8"/>
<g fill="#555">
  <rect x="11" y="1009" width="2" height="14"/><polygon points="23,1009 23,1023 14,1016"/>
  <polygon points="35,1016 44,1009 44,1023"/><rect x="46" y="1012" width="2" height="8"/>
  <polygon points="61,1008 73,1016 61,1024"/>
  <rect x="85" y="1012" width="2" height="8"/><polygon points="89,1009 98,1016 89,1023"/>
  <polygon points="111,1009 120,1016 111,1023"/><rect x="121" y="1009" width="2" height="14"/>
</g>
<rect x="142.5" y="1003.5" width="23" height="23.5" rx="2" fill="#0e96d8"/>
<rect x="149" y="1007.5" width="13" height="14" fill="url(#rct)" stroke="#111" stroke-width="1.2"/>
<path d="M152 1011 V1019 H160" stroke="#222" fill="none"/>
<path d="M154 1015 L161 1007 L163 1009 L156 1017 Z" fill="#f6d02c"/>
<rect x="154" y="1027" width="2" height="6" fill="#ccc"/>
<polygon points="160,1001 172,1001 172,1004 166,1010 160,1004" fill="#666"/><rect x="165" y="1008" width="2" height="25" fill="#666"/>
<circle cx="1899" cy="1016" r="5.5" fill="none" stroke="#555" stroke-width="3.4"/><circle cx="1899" cy="1016" r="7.5" fill="none" stroke="#555" stroke-width="2.2" stroke-dasharray="2.6 3.2"/>

<!-- taskbar -->
<rect y="1040" width="1920" height="3" fill="#0a0a0a"/>
<rect x="48" y="1040" width="344" height="3" fill="#f0f0f0"/><rect x="48" y="1040" width="344" height="1" fill="#b5b5b5"/>
<rect x="639" y="1040" width="48" height="3" fill="#9c5a1e"/>
<rect x="835" y="1040" width="48" height="3" fill="#3c3c3c"/>
</svg>
</body></html>
